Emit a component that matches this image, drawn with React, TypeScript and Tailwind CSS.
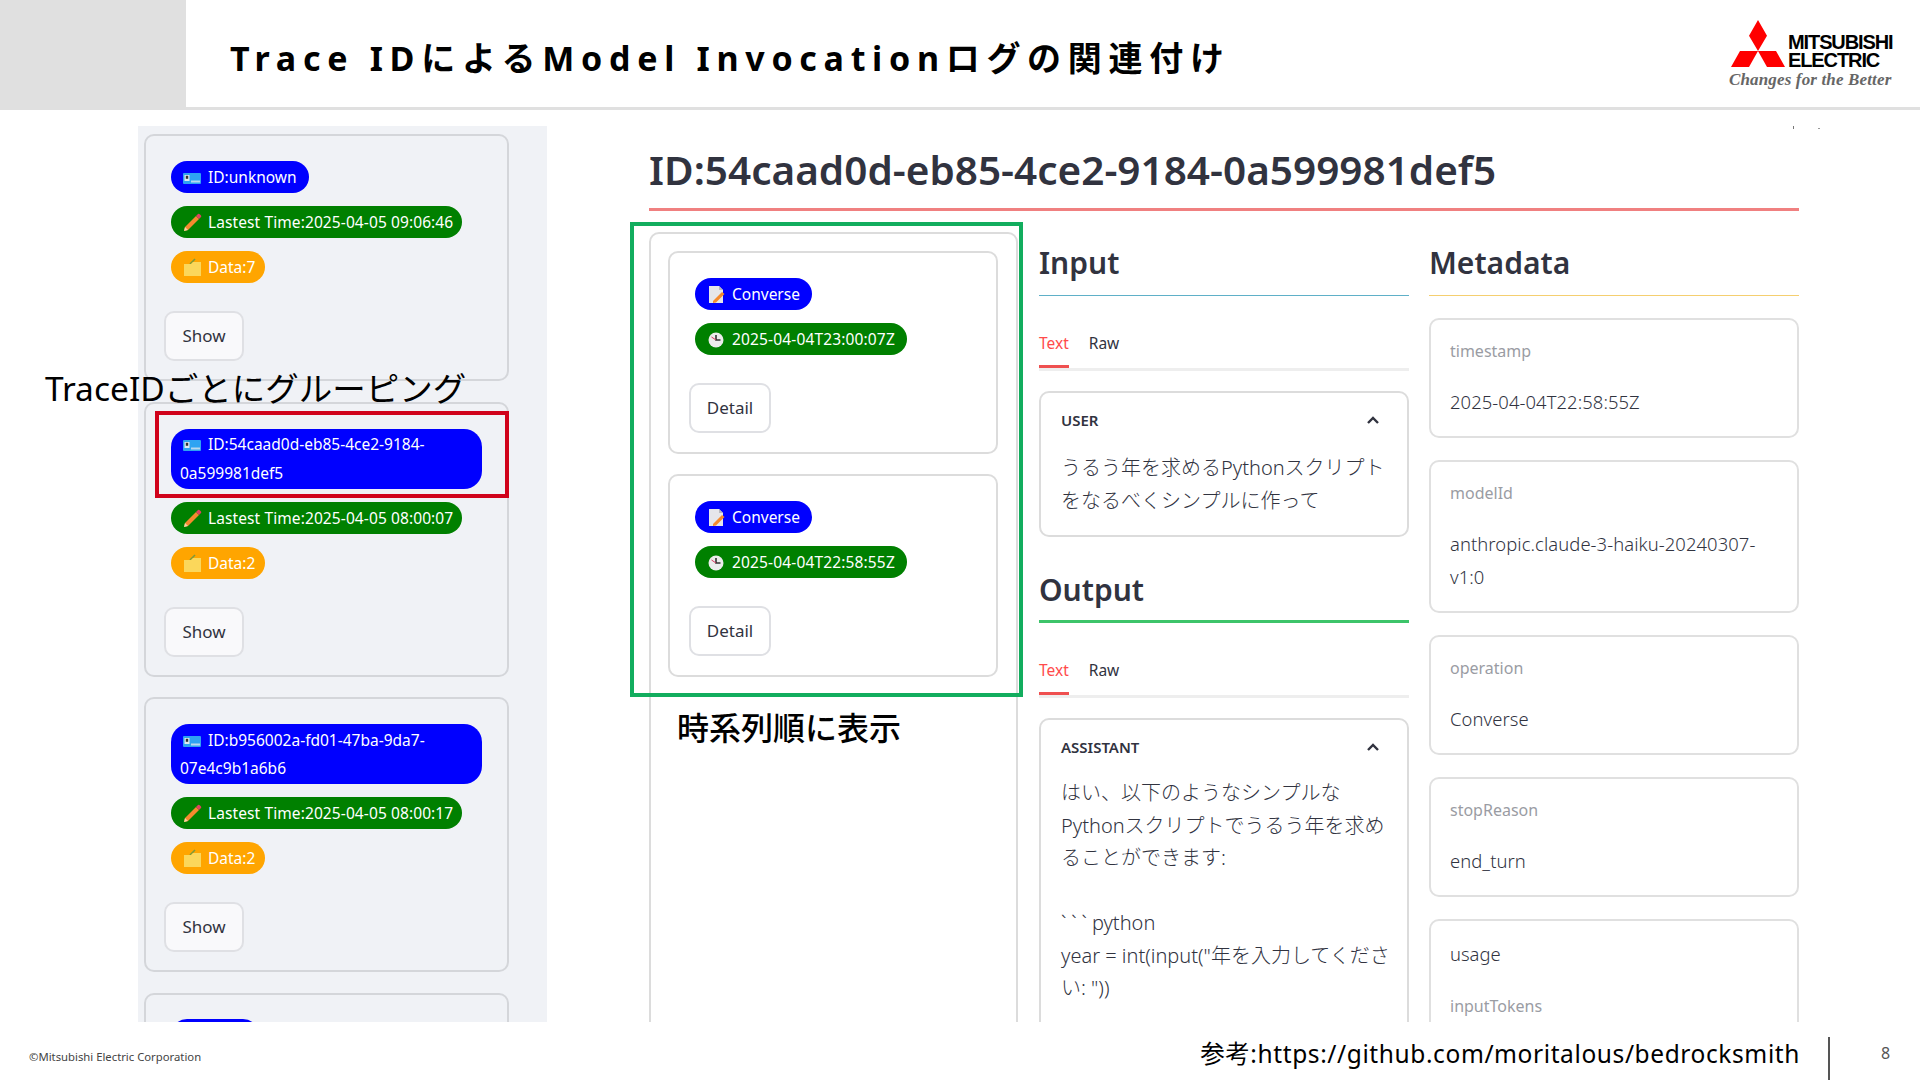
import React from "react";

const sans = "[font-family:'Noto_Sans','Noto_Sans_CJK_JP',sans-serif]";

function IdIcon() {
  return (
    <svg width="18" height="14" viewBox="0 0 18 14" className="inline-block align-[-2px] mr-[7px]">
      <rect x="0" y="2" width="18" height="11" rx="1" fill="#2ea3f2" />
      <rect x="1.5" y="4" width="5" height="6" fill="#dfe8f0" />
      <rect x="2.8" y="4.8" width="2.4" height="3" fill="#333" />
      <rect x="8" y="9.5" width="9" height="2" fill="#b8d8ee" />
    </svg>
  );
}
function PencilIcon() {
  return (
    <svg width="19" height="19" viewBox="0 0 19 19" className="inline-block align-[-4px] mr-[6px]">
      <path d="M2 14 L13 3 L16 6 L5 17 L1 18 Z" fill="#f58a2e" />
      <path d="M13 3 L15 1 Q16 0.5 17 1.5 L18 2.5 Q18.5 3.5 18 4 L16 6 Z" fill="#e0415f" />
      <path d="M1 18 L2 14 L5 17 Z" fill="#f5d6a8" />
    </svg>
  );
}
function FolderIcon() {
  return (
    <svg width="19" height="19" viewBox="0 0 19 19" className="inline-block align-[-4px] mr-[6px]">
      <path d="M7 6 L12 1" stroke="#7d9a3a" strokeWidth="1.6" />
      <path d="M1 6 H8 L10 4 H18 V18 H1 Z" fill="#fbd75b" />
    </svg>
  );
}
function MemoIcon() {
  return (
    <svg width="17" height="19" viewBox="0 0 17 19" className="inline-block align-[-4px] mr-[7px]">
      <path d="M1 1 H11 L15 5 V18 H1 Z" fill="#e6e6ea" />
      <path d="M11 1 L15 5 H11 Z" fill="#b8b8c0" />
      <path d="M5 16 L14 7 L16.5 9 L8 17.5 L5 18 Z" fill="#f58a2e" />
    </svg>
  );
}
function ClockIcon() {
  return (
    <svg width="16" height="16" viewBox="0 0 16 16" className="inline-block align-[-3px] mr-[8px]">
      <circle cx="8" cy="8" r="7.5" fill="#ececec" />
      <path d="M8 3 V8 H12.5" stroke="#333" strokeWidth="1.6" fill="none" />
      <path d="M8 8 L3.5 5" stroke="#d8345f" strokeWidth="1" />
    </svg>
  );
}

function Pill({ color, icon, children, wide, ml, right = "pr-[12px]", track = "" }: { color: string; icon: React.ReactNode; children: React.ReactNode; wide?: boolean; ml?: boolean; right?: string; track?: string }) {
  const shape = wide
    ? "w-[311px] leading-[28.5px] py-[1.5px] px-[9px] rounded-[18px]"
    : `w-fit whitespace-nowrap leading-[32px] rounded-[16px] ${right} ${ml ? "pl-[13px]" : "pl-[12px]"}`;
  return (
    <div className={`${color} text-white text-[15.5px] ${shape}`}>
      {wide ? <span className="inline-block w-[3px]" /> : null}
      {icon}
      <span className={track}>{children}</span>
    </div>
  );
}

function TraceCard({ id, time, data, wide }: { id: string; time: string; data: string; wide?: boolean }) {
  return (
    <div className="shrink-0 w-[365px] border-2 border-[#d4d6da] rounded-[10px] pl-[25px] pr-[24px] pt-[25px] pb-[18px] mb-[20.5px] flex flex-col gap-[13px]">
      <Pill color="bg-[#0000ff]" icon={<IdIcon />} wide={wide}>{id}</Pill>
      <Pill color="bg-[#008000]" icon={<PencilIcon />} right="pr-[9px]" track="tracking-[0.1px]">{time}</Pill>
      <Pill color="bg-[#ffa500]" icon={<FolderIcon />} right="pr-[10px]">{data}</Pill>
      <button className="-ml-[7px] mt-[15px] w-[80px] h-[50px] bg-[#f9f9fb] border-2 border-[#dfe0e4] rounded-[10px] text-[17px] text-[#31333f]">Show</button>
    </div>
  );
}

function ConverseCard({ time }: { time: string }) {
  return (
    <div className="h-[203px] border-2 border-[#dcdcdc] rounded-[10px] pl-[25px] pt-[25px] flex flex-col gap-[13px]">
      <Pill color="bg-[#0000ff]" icon={<MemoIcon />} ml>Converse</Pill>
      <Pill color="bg-[#008000]" icon={<ClockIcon />} ml track="tracking-[0.15px]">{time}</Pill>
      <button className="-ml-[6px] mt-[15px] w-[82px] h-[50px] bg-white border-2 border-[#dfe0e4] rounded-[10px] text-[17px] text-[#31333f]">Detail</button>
    </div>
  );
}

function Tabs() {
  return (
    <div className="border-b-[3px] border-[#eeeeee] flex gap-[20px] h-[75px] items-start pt-[35px]">
      <div className="relative text-[#ff4b4b] text-[15.5px] leading-[24px] h-[37px]">
        Text
        <div className="absolute left-0 right-0 bottom-0 h-[3px] bg-[#ef5050]" />
      </div>
      <div className="text-[#31333f] text-[15.5px] leading-[24px]">Raw</div>
    </div>
  );
}

function Chevron() {
  return (
    <svg width="14" height="9" viewBox="0 0 14 9"><path d="M2 7 L7 2 L12 7" stroke="#31333f" strokeWidth="2.4" fill="none" /></svg>
  );
}

function Message({ role, lines, h, gap }: { role: string; lines: React.ReactNode[]; h: string; gap: string }) {
  return (
    <div className={`border-2 border-[#dcdcdc] rounded-[10px] px-[20px] pt-[14px] ${h}`}>
      <div className="flex justify-between items-center h-[26px] pr-[7px]">
        <span className="text-[15px] font-semibold text-[#31333f]">{role}</span>
        <Chevron />
      </div>
      <div className={`${gap} text-[20px] leading-[32.5px] text-[#31333f] font-light whitespace-nowrap`}>
        {lines.map((l, i) => (
          <div key={i} className="h-[32.5px]">{l}</div>
        ))}
      </div>
    </div>
  );
}

function Meta({ label, value, h }: { label: string; value: string[]; h: string }) {
  return (
    <div className={`shrink-0 ${h} border-2 border-[#e0e0e0] rounded-[10px] px-[19px] pt-[19px]`}>
      <div className="text-[16px] leading-[24px] text-[#9a9ca3]">{label}</div>
      <div className="mt-[22px] text-[18.4px] leading-[33px] tracking-[0.08px] text-[#31333f] font-light whitespace-nowrap">
        {value.map((v) => <div key={v}>{v}</div>)}
      </div>
    </div>
  );
}

export default function App() {
  return (
    <div className={`relative w-[1920px] h-[1080px] overflow-hidden bg-white ${sans}`}>
      <header className="h-[110px] border-b-[3px] border-[#e0e0e0] flex">
        <div className="w-[186px] h-full bg-[#e0e0e0]" />
        <div className="flex-1 pl-[44px] pt-[33px]">
          <h1 className="text-[34px] leading-[50px] font-bold tracking-[6.7px] text-black whitespace-nowrap">Trace IDによるModel Invocationログの関連付け</h1>
        </div>
        <div className="w-[190px] pt-[20px] shrink-0">
          <div className="flex items-start">
            <svg width="56" height="48" viewBox="0 0 56 48" className="shrink-0">
              <path d="M28 0 L37 15.7 L28 31 L19 15.7 Z M28 31 L46 31 L55 47 L37 47 Z M28 31 L10 31 L1 47 L19 47 Z" fill="#ff0000" />
            </svg>
            <div className="ml-[2px] mt-[14px] text-[20px] leading-[17.5px] font-bold text-black [font-family:'Liberation_Sans',sans-serif] tracking-[-1.1px]">
              <div>MITSUBISHI</div>
              <div>ELECTRIC</div>
            </div>
          </div>
          <div className="mt-[2px] text-[17px] leading-[18px] font-bold italic text-[#666666] [font-family:'Liberation_Serif',serif] tracking-[0.15px] whitespace-nowrap -ml-[1px]">Changes for the Better</div>
        </div>
      </header>

      <main className="h-[912px] overflow-hidden flex pl-[138px] pt-[16px]">
        <aside className="w-[409px] shrink-0 bg-[#f0f2f6] pl-[6px] pt-[8px] flex flex-col overflow-hidden">
          <TraceCard id="ID:unknown" time="Lastest Time:2025-04-05 09:06:46" data="Data:7" />
          <TraceCard id="ID:54caad0d-eb85-4ce2-9184-0a599981def5" time="Lastest Time:2025-04-05 08:00:07" data="Data:2" wide />
          <TraceCard id="ID:b956002a-fd01-47ba-9da7-07e4c9b1a6b6" time="Lastest Time:2025-04-05 08:00:17" data="Data:2" wide />
          <div className="shrink-0 w-[365px] h-[200px] border-2 border-[#d4d6da] rounded-[10px] pl-[25px] pt-[24px]">
            <div className="w-[88px] h-[32px] bg-[#0000ff] rounded-[16px]" />
          </div>
        </aside>

        <section className="ml-[102px] w-[1150px] shrink-0">
          <h2 className="text-[40.5px] leading-[60px] pt-[14px] box-content h-[68px] font-semibold text-[#31333f] whitespace-nowrap border-b-[3px] border-[#f08080]">ID:54caad0d-eb85-4ce2-9184-0a599981def5</h2>
          <div className="flex mt-[21px]">
            <div className="w-[369px] shrink-0 h-[900px] border-2 border-[#dcdcdc] rounded-[10px] pl-[17px] pr-[18px] pt-[17px] flex flex-col gap-[20px]">
              <ConverseCard time="2025-04-04T23:00:07Z" />
              <ConverseCard time="2025-04-04T22:58:55Z" />
            </div>
            <div className="w-[370px] shrink-0 ml-[21px]">
              <h3 className="text-[30px] leading-[48px] font-semibold text-[#31333f] pt-[7px] box-content h-[56px] border-b border-[#5fb0c8]">Input</h3>
              <Tabs />
              <div className="mt-[20px]">
                <Message role="USER" lines={["うるう年を求めるPythonスクリプト", "をなるべくシンプルに作って"]} h="h-[146px]" gap="mt-[19px]" />
              </div>
              <h3 className="mt-[29px] text-[30px] leading-[48px] font-semibold text-[#31333f] border-b-[3px] border-[#3dc46a] box-content h-[54px]">Output</h3>
              <Tabs />
              <div className="mt-[20px]">
                <Message
                  role="ASSISTANT"
                  lines={[
                    "はい、以下のようなシンプルな",
                    "Pythonスクリプトでうるう年を求め",
                    "ることができます:",
                    "",
                    <span key="py"><span className="tracking-[5px]">```</span>python</span>,
                    "year = int(input(\"年を入力してくださ",
                    "い: \"))",
                  ]}
                  h="h-[500px]"
                  gap="mt-[17px]"
                />
              </div>
            </div>
            <div className="w-[370px] shrink-0 ml-[20px] flex flex-col">
              <h3 className="text-[30px] leading-[48px] font-semibold text-[#31333f] pt-[7px] box-content h-[56px] border-b border-[#f5cf70]">Metadata</h3>
              <div className="mt-[22px] flex flex-col gap-[22px]">
                <Meta label="timestamp" value={["2025-04-04T22:58:55Z"]} h="h-[120px]" />
                <Meta label="modelId" value={["anthropic.claude-3-haiku-20240307-", "v1:0"]} h="h-[153px]" />
                <Meta label="operation" value={["Converse"]} h="h-[120px]" />
                <Meta label="stopReason" value={["end_turn"]} h="h-[120px]" />
                <div className="shrink-0 h-[300px] border-2 border-[#e0e0e0] rounded-[10px] px-[19px] pt-[21px]">
                  <div className="text-[18.4px] leading-[24px] text-[#31333f] font-light">usage</div>
                  <div className="mt-[28px] text-[16px] leading-[24px] text-[#9a9ca3]">inputTokens</div>
                </div>
              </div>
            </div>
          </div>
        </section>
      </main>

      <div className="absolute left-[45px] top-[366px] text-[33.5px] leading-[44px] text-black font-normal whitespace-nowrap">TraceIDごとにグルーピング</div>
      <div className="absolute left-[155px] top-[411px] w-[354px] h-[87px] border-4 border-[#d0021b]" />
      <div className="absolute left-[630px] top-[222px] w-[393px] h-[475px] border-4 border-[#12ad5e]" />
      <div className="absolute left-[677px] top-[706px] text-[32px] leading-[44px] text-black font-medium whitespace-nowrap">時系列順に表示</div>
      <div className="absolute left-[1793px] top-[126px] w-[1px] h-[3px] bg-[#777777]" />
      <div className="absolute left-[1818px] top-[128px] w-[2px] h-[1px] bg-[#999999]" />

      <footer className="absolute left-0 right-0 bottom-0 h-[58px] bg-white flex items-start">
        <div className="pl-[29px] pt-[26px] text-[11.3px] leading-[18px] text-[#444444]">©Mitsubishi Electric Corporation</div>
        <div className="ml-auto mt-[14px] text-[24.5px] leading-[36px] text-black tracking-[0.6px] whitespace-nowrap">参考:https://github.com/moritalous/bedrocksmith</div>
        <div className="ml-[28px] w-[2px] h-[43px] mt-[15px] bg-[#555555]" />
        <div className="w-[90px] pl-[51px] pt-[19px] text-[16px] leading-[24px] text-[#555555]">8</div>
      </footer>
    </div>
  );
}
